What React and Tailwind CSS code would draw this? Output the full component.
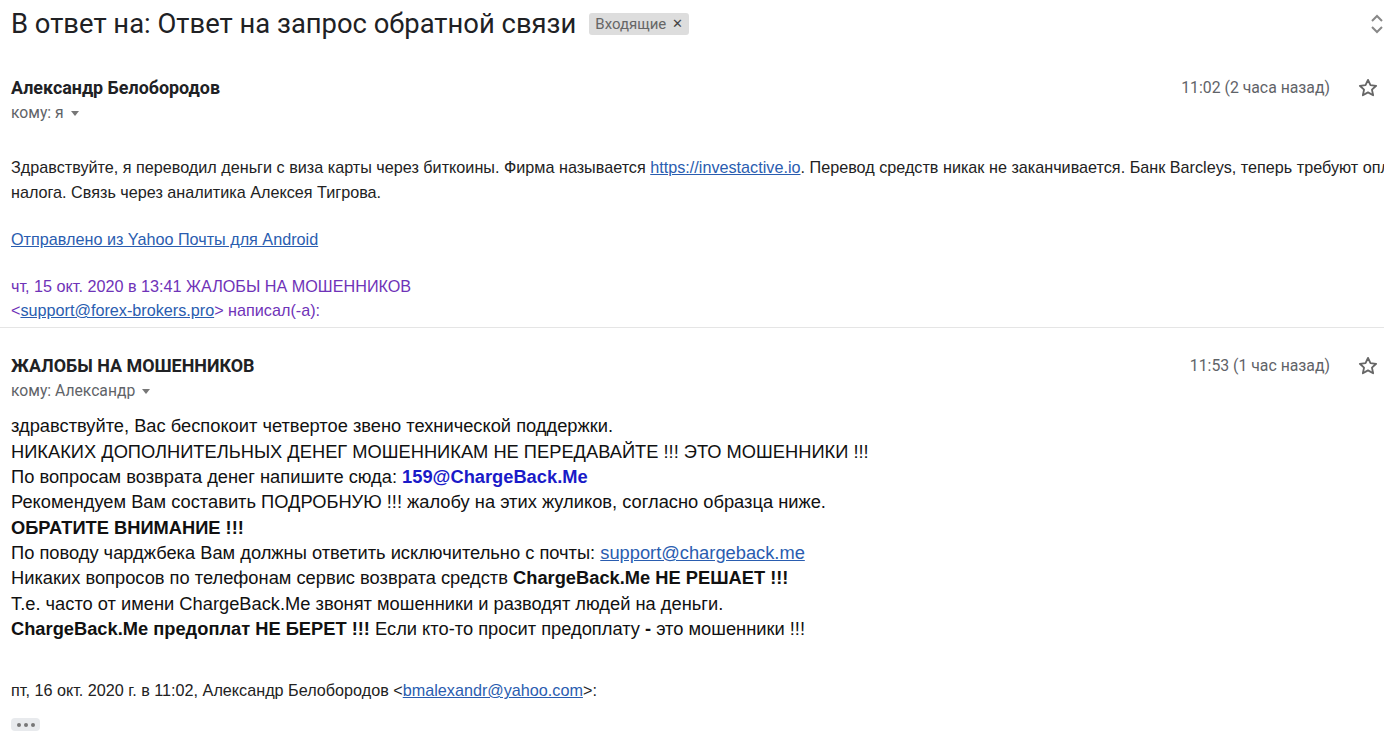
function StarIcon() {
  return (
    <svg width="22" height="22" viewBox="0 0 24 24" className="text-[#666]">
      <path
        d="M12 3.2l2.7 5.7 6.2.7-4.6 4.2 1.3 6.1L12 16.8l-5.6 3.1 1.3-6.1-4.6-4.2 6.2-.7z"
        fill="none"
        stroke="currentColor"
        strokeWidth="2"
        strokeLinejoin="round"
      />
    </svg>
  )
}

function Caret() {
  return <span className="ml-[7px] inline-block border-x-[4px] border-t-[5px] border-x-transparent border-t-[#777] align-middle" />
}

function MessageHeader({ name, to, time }) {
  return (
    <div className="relative flex items-start font-['Roboto','Liberation_Sans',sans-serif]">
      <div className="flex-1">
        <div className="text-[17.9px] font-bold leading-[22px] text-[#202124]">{name}</div>
        <div className="mt-[4px] flex items-center text-[15.7px] leading-[20px] text-[#5f6368]">
          кому: {to}
          <Caret />
        </div>
      </div>
      <div className="mr-[54px] text-[15.8px] leading-[22px] text-[#5f6368]">{time}</div>
      <div className="absolute right-[5px] top-0">
        <StarIcon />
      </div>
    </div>
  )
}

export default function App() {
  return (
    <div className="relative h-[739px] w-[1384px] overflow-hidden bg-white font-['Liberation_Sans',Arial,sans-serif] text-[#222]">
      {/* subject */}
      <div className="flex items-center pl-[11px] pt-[7px]">
        <h1 className="font-['Roboto',sans-serif] text-[27.4px] font-normal leading-[34px] text-[#202124]">
          В ответ на: Ответ на запрос обратной связи
        </h1>
        <span className="ml-[13px] flex h-[22px] items-center rounded-[3px] bg-[#dddddd] pl-[6px] pr-[6px] font-['Roboto',sans-serif] text-[15px] text-[#666]">
          Входящие <span className="ml-[6px] text-[13px] text-[#444]">✕</span>
        </span>
        <svg className="absolute right-0 top-[13px]" width="14" height="22" viewBox="0 0 14 22">
          <path d="M2 8l5-5 5 5M2 14l5 5 5-5" fill="none" stroke="#888" strokeWidth="2" />
        </svg>
      </div>

      {/* message 1 */}
      <div className="mt-[36px] pl-[11px]">
        <MessageHeader name="Александр Белобородов" to="я" time="11:02 (2 часа назад)" />
        <div className="mt-[32px] text-[16.2px] leading-[25.3px]">
          <div className="whitespace-nowrap">
            Здравствуйте, я переводил деньги с виза карты через биткоины. Фирма называется{' '}
            <a className="text-[#2a5db0] underline">https://investactive.io</a>. Перевод средств никак не заканчивается. Банк Barcleys, теперь требуют оплату
          </div>
          <div>налога. Связь через аналитика Алексея Тигрова.</div>
          <div className="mt-[21px]">
            <a className="text-[#2a5db0] underline">Отправлено из Yahoo Почты для Android</a>
          </div>
          <div className="mt-[22px] text-[#6f33b8]">
            <div>чт, 15 окт. 2020 в 13:41 ЖАЛОБЫ НА МОШЕННИКОВ</div>
            <div className="-mt-[1px]">
              &lt;<a className="text-[#2a5db0] underline">support@forex-brokers.pro</a>&gt; написал(-а):
            </div>
          </div>
        </div>
      </div>

      <div className="mt-[4px] h-px bg-[#e5e5e5]" />

      {/* message 2 */}
      <div className="mt-[27px] pl-[11px]">
        <MessageHeader name="ЖАЛОБЫ НА МОШЕННИКОВ" to="Александр" time="11:53 (1 час назад)" />
        <div className="mt-[12px] text-[18.3px] leading-[25.3px] text-[#111]">
          <div>здравствуйте, Вас беспокоит четвертое звено технической поддержки.</div>
          <div>НИКАКИХ ДОПОЛНИТЕЛЬНЫХ ДЕНЕГ МОШЕННИКАМ НЕ ПЕРЕДАВАЙТЕ !!! ЭТО МОШЕННИКИ !!!</div>
          <div>
            По вопросам возврата денег напишите сюда: <b className="text-[#1a1ac8]">159@ChargeBack.Me</b>
          </div>
          <div>Рекомендуем Вам составить ПОДРОБНУЮ !!! жалобу на этих жуликов, согласно образца ниже.</div>
          <div className="font-bold">ОБРАТИТЕ ВНИМАНИЕ !!!</div>
          <div>
            По поводу чарджбека Вам должны ответить исключительно с почты:{' '}
            <a className="text-[#2a5db0] underline">support@chargeback.me</a>
          </div>
          <div>
            Никаких вопросов по телефонам сервис возврата средств <b>ChargeBack.Me НЕ РЕШАЕТ !!!</b>
          </div>
          <div>Т.е. часто от имени ChargeBack.Me звонят мошенники и разводят людей на деньги.</div>
          <div>
            <b>ChargeBack.Me предоплат НЕ БЕРЕТ !!!</b> Если кто-то просит предоплату <b>-</b> это мошенники !!!
          </div>
        </div>
        <div className="mt-[38px] text-[16.2px] leading-[22px] text-[#222]">
          пт, 16 окт. 2020 г. в 11:02, Александр Белобородов &lt;
          <a className="text-[#2a5db0] underline">bmalexandr@yahoo.com</a>&gt;:
        </div>
        <div className="mt-[17px] flex h-[13px] w-[29px] items-center justify-center gap-[3px] rounded-[4px] bg-[#e8eaed]">
          <span className="h-[4px] w-[4px] rounded-full bg-[#777]" />
          <span className="h-[4px] w-[4px] rounded-full bg-[#777]" />
          <span className="h-[4px] w-[4px] rounded-full bg-[#777]" />
        </div>
      </div>
    </div>
  )
}
